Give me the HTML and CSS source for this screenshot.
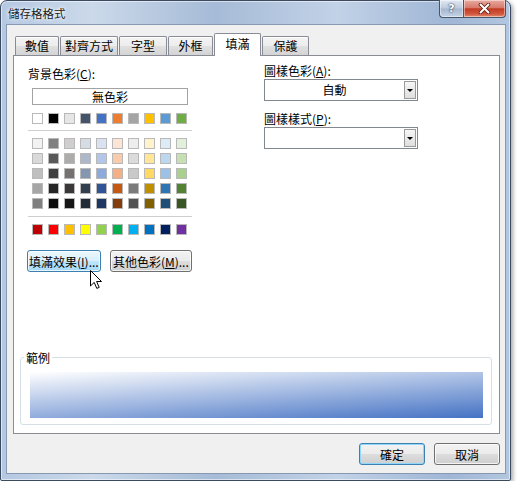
FILE: index.html
```html
<!DOCTYPE html>
<html lang="zh-Hant">
<head>
<meta charset="utf-8">
<title>儲存格格式</title>
<link rel="stylesheet" href="styles.css">
</head>
<body>
<div class="window">
  <div class="titlebar">
    <span class="title">儲存格格式</span>
    <div class="caption-btns">
      <div class="cap help">?</div>
      <div class="cap close">
        <svg width="13" height="11" viewBox="0 0 13 11"><path d="M2.5 1.5 L10.5 9.5 M10.5 1.5 L2.5 9.5" stroke="#5a1a10" stroke-width="3.6" stroke-linecap="round"/><path d="M2.5 1.5 L10.5 9.5 M10.5 1.5 L2.5 9.5" stroke="#ffffff" stroke-width="2" stroke-linecap="round"/></svg>
      </div>
    </div>
  </div>
  <div class="client">
    <div class="tabs">
      <div class="tab w1">數值</div>
      <div class="tab w2">對齊方式</div>
      <div class="tab w3">字型</div>
      <div class="tab w4">外框</div>
      <div class="tab sel w5">填滿</div>
      <div class="tab w6">保護</div>
    </div>
    <div class="panel">
      <div class="top">
        <div class="left">
          <div class="label">背景色彩(<u>C</u>):</div>
          <div class="nocolor">無色彩</div>
          <div class="swrow row1">
            <div class="sw" style="background:#ffffff"></div>
            <div class="sw" style="background:#000000"></div>
            <div class="sw" style="background:#e7e6e6"></div>
            <div class="sw" style="background:#44546a"></div>
            <div class="sw" style="background:#4472c4"></div>
            <div class="sw" style="background:#ed7d31"></div>
            <div class="sw" style="background:#a5a5a5"></div>
            <div class="sw" style="background:#ffc000"></div>
            <div class="sw" style="background:#5b9bd5"></div>
            <div class="sw" style="background:#70ad47"></div>
          </div>
          <div class="sep"></div>
          <div class="grid">
            <div class="sw" style="background:#f2f2f2"></div>
            <div class="sw" style="background:#808080"></div>
            <div class="sw" style="background:#d0cece"></div>
            <div class="sw" style="background:#d6dce4"></div>
            <div class="sw" style="background:#d9e1f2"></div>
            <div class="sw" style="background:#fce4d6"></div>
            <div class="sw" style="background:#ededed"></div>
            <div class="sw" style="background:#fff2cc"></div>
            <div class="sw" style="background:#ddebf7"></div>
            <div class="sw" style="background:#e2efda"></div>

            <div class="sw" style="background:#d9d9d9"></div>
            <div class="sw" style="background:#595959"></div>
            <div class="sw" style="background:#aeabab"></div>
            <div class="sw" style="background:#adb9ca"></div>
            <div class="sw" style="background:#b4c6e7"></div>
            <div class="sw" style="background:#f8cbad"></div>
            <div class="sw" style="background:#dbdbdb"></div>
            <div class="sw" style="background:#ffe699"></div>
            <div class="sw" style="background:#bdd7ee"></div>
            <div class="sw" style="background:#c6e0b4"></div>

            <div class="sw" style="background:#bfbfbf"></div>
            <div class="sw" style="background:#404040"></div>
            <div class="sw" style="background:#757171"></div>
            <div class="sw" style="background:#8497b0"></div>
            <div class="sw" style="background:#8ea9db"></div>
            <div class="sw" style="background:#f4b084"></div>
            <div class="sw" style="background:#c9c9c9"></div>
            <div class="sw" style="background:#ffd966"></div>
            <div class="sw" style="background:#9bc2e6"></div>
            <div class="sw" style="background:#a9d08e"></div>

            <div class="sw" style="background:#a6a6a6"></div>
            <div class="sw" style="background:#262626"></div>
            <div class="sw" style="background:#3a3838"></div>
            <div class="sw" style="background:#333f4f"></div>
            <div class="sw" style="background:#305496"></div>
            <div class="sw" style="background:#c65911"></div>
            <div class="sw" style="background:#7b7b7b"></div>
            <div class="sw" style="background:#bf8f00"></div>
            <div class="sw" style="background:#2f75b5"></div>
            <div class="sw" style="background:#548235"></div>

            <div class="sw" style="background:#808080"></div>
            <div class="sw" style="background:#0d0d0d"></div>
            <div class="sw" style="background:#171616"></div>
            <div class="sw" style="background:#222b35"></div>
            <div class="sw" style="background:#203764"></div>
            <div class="sw" style="background:#833c0c"></div>
            <div class="sw" style="background:#525252"></div>
            <div class="sw" style="background:#806000"></div>
            <div class="sw" style="background:#1f4e78"></div>
            <div class="sw" style="background:#375623"></div>
          </div>
          <div class="sep sep2"></div>
          <div class="swrow stdrow">
            <div class="sw" style="background:#c00000"></div>
            <div class="sw" style="background:#ff0000"></div>
            <div class="sw" style="background:#ffc000"></div>
            <div class="sw" style="background:#ffff00"></div>
            <div class="sw" style="background:#92d050"></div>
            <div class="sw" style="background:#00b050"></div>
            <div class="sw" style="background:#00b0f0"></div>
            <div class="sw" style="background:#0070c0"></div>
            <div class="sw" style="background:#002060"></div>
            <div class="sw" style="background:#7030a0"></div>
          </div>
          <div class="btns">
            <button class="btn hover fx">填滿效果(<u>I</u>)...</button>
            <button class="btn more">其他色彩(<u>M</u>)...</button>
            <svg class="cursor" width="13" height="20" viewBox="0 0 13 20"><path d="M0.5 0.5 L0.5 16 L4.2 12.4 L6.8 18.4 L9.2 17.4 L6.6 11.5 L11.5 11.5 Z" fill="#ffffff" stroke="#000000" stroke-width="1" stroke-linejoin="miter"/></svg>
          </div>
        </div>
        <div class="right">
          <div class="label">圖樣色彩(<u>A</u>):</div>
          <div class="combo">
            <span class="val">自動</span>
            <span class="dd"><span class="tri"></span></span>
          </div>
          <div class="label label2">圖樣樣式(<u>P</u>):</div>
          <div class="combo">
            <span class="val"></span>
            <span class="dd"><span class="tri"></span></span>
          </div>
        </div>
      </div>
      <fieldset class="sample">
        <legend>範例</legend>
        <div class="grad"></div>
      </fieldset>
    </div>
    <div class="footer">
      <button class="btn ok default">確定</button>
      <button class="btn ok">取消</button>
    </div>
  </div>
</div>
</body>
</html>
```

FILE: styles.css
```css
html, body {
  margin: 0;
  padding: 0;
  background: #ffffff;
}

body {
  font-family: "Noto Sans CJK TC", "Noto Sans", "DejaVu Sans", sans-serif;
  font-size: 12px;
  color: #000;
}

.window {
  width: 511px;
  height: 481px;
  box-sizing: border-box;
  border: 1px solid #3b4a5e;
  border-radius: 7px 7px 2px 2px;
  background: linear-gradient(90deg, #b4c8e2 0%, #cbd9ea 18%, #a6bbd7 42%, #c2d2e7 66%, #9fb6d5 88%, #b3c6df 100%);
  padding: 0 4px 6px 5px;
  display: flex;
  flex-direction: column;
  box-shadow: inset 0 0 0 1px rgba(255, 255, 255, 0.55), 2px 2px 4px rgba(0, 0, 0, 0.35);
}

.titlebar {
  height: 23px;
  display: flex;
  align-items: flex-start;
  flex: none;
}

.title {
  margin: 5px 0 0 2px;
  font-size: 11.5px;
  line-height: 15px;
  color: #1a1a1a;
  text-shadow: 0 0 5px #ffffff, 0 0 3px #ffffff;
}

.caption-btns {
  margin-left: auto;
  margin-top: -1px;
  display: flex;
}

.cap {
  height: 18px;
  box-sizing: border-box;
  border: 1px solid #44556c;
  border-top: none;
  display: flex;
  align-items: center;
  justify-content: center;
  box-shadow: inset 0 0 0 1px rgba(255, 255, 255, 0.45);
}

.help {
  width: 24px;
  border-right: none;
  border-radius: 0 0 0 4px;
  background: linear-gradient(#e2e9f2, #bccadc 48%, #a5b7cf 52%, #c5d3e5);
  color: #ffffff;
  font: bold 11px "DejaVu Sans", sans-serif;
  text-shadow: 0 0 2px #2a3550, 0 0 1px #2a3550;
}

.close {
  width: 43px;
  border-radius: 0 0 4px 0;
  background: linear-gradient(#eaaaa0, #d77a6b 45%, #c23b24 52%, #d0553c 80%, #e4896c);
}

.client {
  flex: 1;
  background: #f0f0f0;
  border: 1px solid #8799b1;
  padding: 8px 5px 8px 6px;
  display: flex;
  flex-direction: column;
}

.tabs {
  display: flex;
  align-items: flex-end;
  gap: 1px;
  padding-left: 2px;
  height: 23px;
  position: relative;
  z-index: 1;
  flex: none;
}

.tab {
  height: 19px;
  margin-bottom: 1px;
  box-sizing: border-box;
  border: 1px solid #898c95;
  border-bottom: none;
  border-radius: 2px 2px 0 0;
  background: linear-gradient(#f4f4f4, #ececec 50%, #e0e0e0 51%, #d4d4d4);
  text-align: center;
  line-height: 18px;
  box-shadow: inset 0 1px 0 #ffffff;
}

.tab.sel {
  height: 23px;
  margin-bottom: 0;
  background: #ffffff;
  line-height: 20px;
}

.w1 { width: 44px; }
.w2 { width: 58px; }
.w3 { width: 48px; }
.w4 { width: 45px; }
.w5 { width: 47px; }
.w6 { width: 47px; }

.panel {
  flex: 1;
  margin-top: -1px;
  background: #ffffff;
  border: 1px solid #898c95;
  display: flex;
  flex-direction: column;
  padding: 0 0 8px 0;
}

.top {
  display: flex;
  padding: 7px 0 0 14px;
}

.left {
  width: 164px;
  padding-top: 3px;
}

.right {
  width: 154px;
  margin-left: 72px;
}

.label {
  line-height: 15px;
  height: 15px;
  white-space: nowrap;
}

.label2 {
  margin-top: 10px;
}

.nocolor {
  margin: 7px 0 0 4px;
  width: 156px;
  height: 17px;
  box-sizing: border-box;
  border: 1px solid #a3a3a3;
  text-align: center;
  line-height: 15px;
}

.swrow {
  display: flex;
  gap: 5px;
  padding-left: 4px;
}

.row1 { margin-top: 8px; }

.sw {
  width: 11px;
  height: 11px;
  box-sizing: border-box;
  border: 1px solid #b9b9b9;
}

.sep {
  height: 1px;
  background: #cfcfcf;
  margin-top: 6px;
}

.sep2 { margin-top: 7px; }

.grid {
  display: grid;
  grid-template-columns: repeat(10, 11px);
  column-gap: 5px;
  row-gap: 4px;
  margin-top: 7px;
  padding-left: 4px;
}

.stdrow { margin-top: 7px; }

.btns {
  display: flex;
  gap: 9px;
  margin: 15px 0 0 -1px;
  position: relative;
}

.btn {
  height: 22px;
  box-sizing: border-box;
  border: 1px solid #707070;
  border-radius: 3px;
  background: linear-gradient(#f2f2f2, #ebebeb 50%, #dddddd 51%, #cfcfcf);
  font-family: "Noto Sans CJK TC", "Noto Sans", sans-serif;
  font-size: 12px;
  color: #000;
  padding: 0;
  line-height: 19px;
  text-align: center;
  box-shadow: inset 0 0 0 1px rgba(255, 255, 255, 0.75);
  white-space: nowrap;
}

.fx { width: 76px; }
.more { width: 85px; }

.btn.hover {
  border-color: #3c7fb1;
  background: linear-gradient(#eaf6fd, #d9f0fc 50%, #bee6fd 51%, #a7d9f5);
}

.btn.default {
  border-color: #3c7fb1;
  box-shadow: inset 0 0 0 1px #8fd8fb;
}

.cursor {
  position: absolute;
  left: 63px;
  top: 20px;
}

.combo {
  margin-top: 1px;
  height: 22px;
  box-sizing: border-box;
  border: 1px solid #828790;
  background: #ffffff;
  display: flex;
  align-items: center;
}

.combo .val {
  flex: 1;
  text-align: center;
  line-height: 18px;
}

.combo .dd {
  width: 12px;
  height: 18px;
  margin-right: 1px;
  box-sizing: border-box;
  border: 1px solid #9a9a9a;
  background: linear-gradient(#f6f6f6, #dedede);
  display: flex;
  align-items: center;
  justify-content: center;
}

.tri {
  width: 0;
  height: 0;
  border-left: 3px solid transparent;
  border-right: 3px solid transparent;
  border-top: 3px solid #000;
}

.sample {
  margin: auto 7px 0 6px;
  border: 1px solid #d5dfe5;
  border-radius: 3px;
  padding: 7px 8px 6px 9px;
  min-width: 0;
}

.sample legend {
  padding: 0 2px;
  margin-left: -6px;
  line-height: 15px;
}

.grad {
  height: 46px;
  background: linear-gradient(176deg, #ffffff 0%, #4472c4 100%);
}

.footer {
  display: flex;
  justify-content: flex-end;
  gap: 9px;
  margin-top: 9px;
  flex: none;
}

.ok { width: 66px; }
```
